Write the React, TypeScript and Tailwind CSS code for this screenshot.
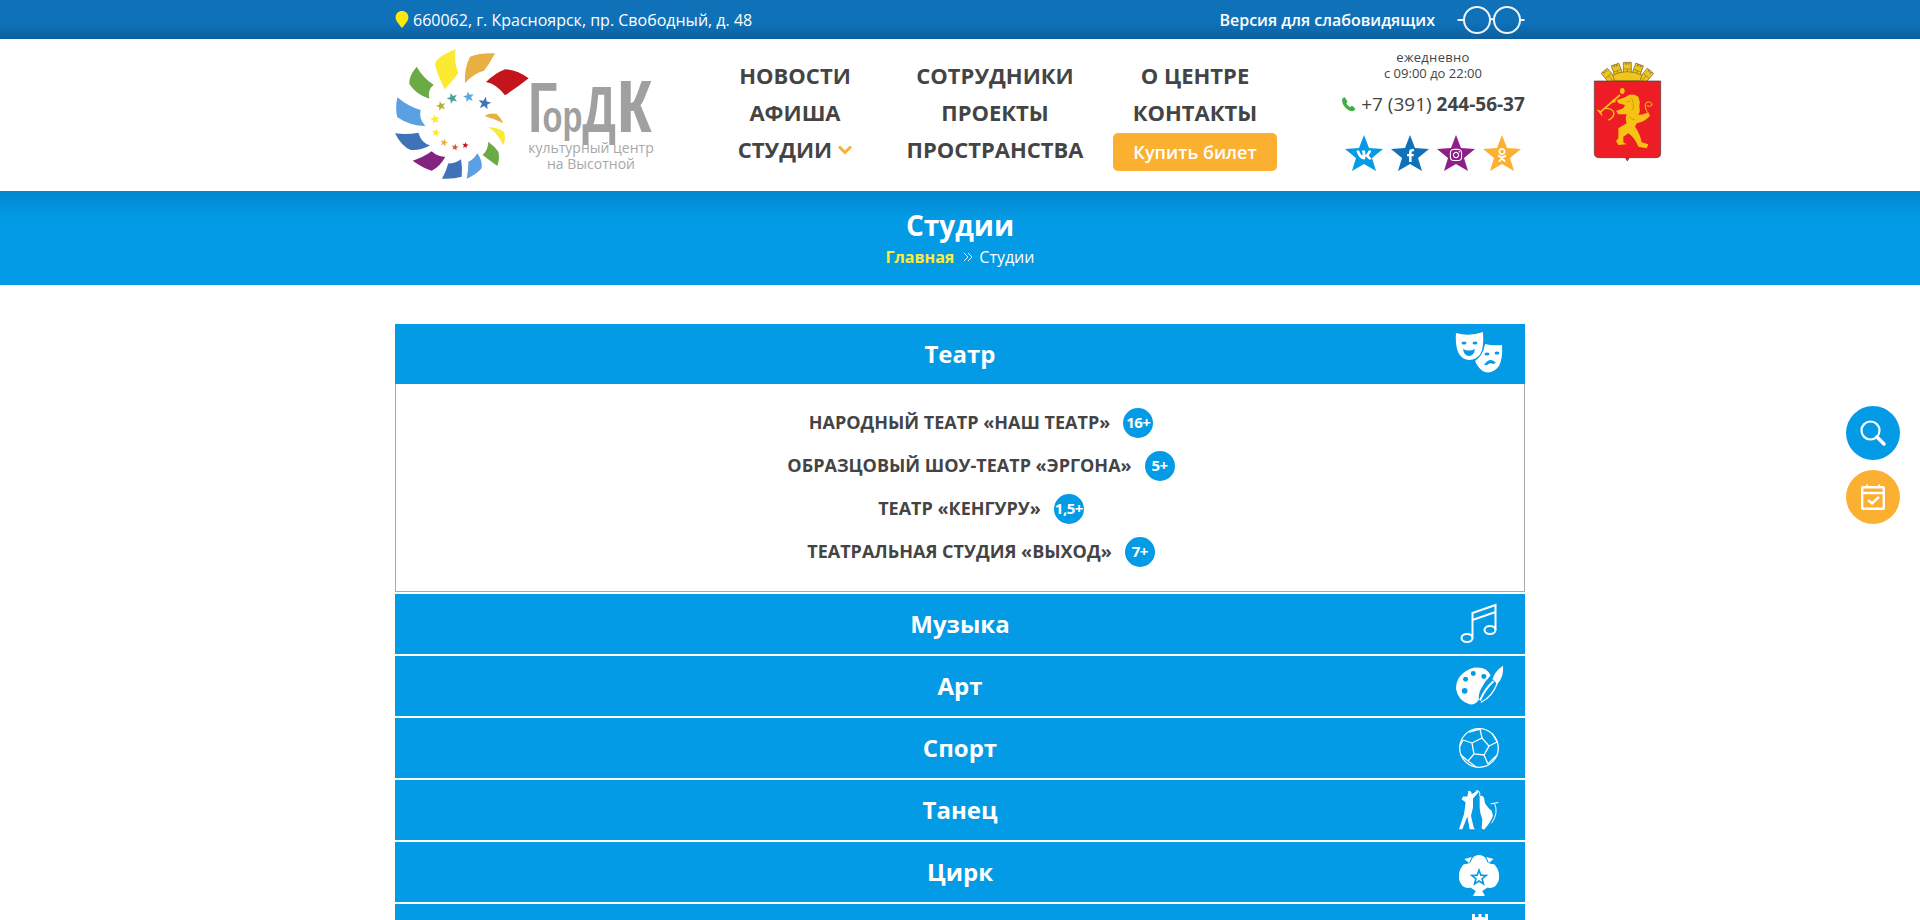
import React from 'react';
import { FaVk, FaFacebookF, FaInstagram, FaOdnoklassniki } from 'react-icons/fa';

const starPoints = (cx: number, cy: number, r: number, rot = 0) => {
  const pts: string[] = [];
  for (let i = 0; i < 10; i++) {
    const rad = i % 2 === 0 ? r : r * 0.42;
    const a = ((-90 + rot + i * 36) * Math.PI) / 180;
    pts.push(`${(cx + rad * Math.cos(a)).toFixed(1)},${(cy + rad * Math.sin(a)).toFixed(1)}`);
  }
  return pts.join(' ');
};

const Logo = () => (
  <div className="relative w-[300px] h-[140px] -ml-[5px]">
    <svg width="180" height="140" viewBox="0 0 540 420">
      <path d="M197 28 Q140 50 135 72 Q145 115 165 148 Q185 125 205 100 Q190 60 197 28Z" fill="#fbe932" />
      <path d="M315 40 Q270 38 240 50 Q222 85 225 130 Q250 100 282 92 Q300 70 315 40Z" fill="#e8b042" />
      <path d="M416 115 Q380 88 345 88 Q315 100 288 126 Q320 132 345 166 Q385 140 416 115Z" fill="#c5151c" />
      <path d="M80 80 Q55 110 58 132 Q80 165 118 176 Q112 150 131 134 Q100 115 80 80Z" fill="#6bab45" />
      <path d="M22 172 Q15 205 22 232 Q60 258 106 258 Q85 235 92 210 Q55 200 22 172Z" fill="#5ba0e3" />
      <path d="M15 280 Q35 320 62 330 Q95 332 120 316 Q95 310 85 278 Q50 285 15 280Z" fill="#4072b8" />
      <path d="M68 362 Q100 385 125 392 Q150 380 166 350 Q145 352 125 334 Q100 352 68 362Z" fill="#82247f" />
      <path d="M156 416 Q190 418 215 410 Q218 385 213 358 Q195 372 175 370 Q168 395 156 416Z" fill="#4072b8" />
      <path d="M230 416 Q258 405 275 385 Q278 362 262 340 Q250 360 235 365 Q236 390 230 416Z" fill="#5ba0e3" />
      <path d="M278 345 Q300 362 322 378 Q330 355 325 335 Q315 320 295 305 Q295 328 278 345Z" fill="#6bab45" />
      <path d="M295 262 Q320 275 340 316 Q348 295 342 275 Q320 262 295 262Z" fill="#fbe932" />
      <path d="M283 228 Q310 235 340 250 Q332 232 320 222 Q300 218 283 228Z" fill="#e8b042" />
      <polygon points={starPoints(284, 190, 20, 10)} fill="#4072b8" />
      <polygon points={starPoints(236, 171, 17, -10)} fill="#5ba8e0" />
      <polygon points={starPoints(187, 175, 17, -20)} fill="#4f9d9d" />
      <polygon points={starPoints(153, 198, 15, -15)} fill="#b5b240" />
      <polygon points={starPoints(135, 238, 15, -10)} fill="#fbe932" />
      <polygon points={starPoints(138, 278, 13, 10)} fill="#fbe932" />
      <polygon points={starPoints(162, 308, 12, 15)} fill="#e8b042" />
      <polygon points={starPoints(195, 322, 11, 10)} fill="#d8562a" />
      <polygon points={starPoints(226, 316, 10, 10)} fill="#c5151c" />
    </svg>
    <div className="absolute left-[138px] top-[14px] h-[90px] flex items-baseline text-[#a0a0a0] font-['Liberation_Sans',sans-serif] font-bold leading-[90px] whitespace-nowrap origin-left scale-x-[0.74]">
      <span className="text-[70px]">Г</span>
      <span className="text-[44px] -ml-[20px]">ор</span>
      <span className="text-[64px]">Д</span>
      <span className="text-[96px]">к</span>
    </div>
    <div className="absolute left-[137px] top-[100px] w-[128px] text-center text-[#a8a8a8] text-[14px] leading-[16px] whitespace-nowrap">
      культурный центр
      <br />
      на Высотной
    </div>
  </div>
);

const towers = [-40, -20, 0, 20, 40];

const Crest = () => (
  <svg width="75" height="110" viewBox="0 0 225 330">
    {towers.map((a) => (
      <g key={a} transform={`rotate(${a} 112 130)`}>
        <path d="M100 22 h7 v6 h2 v-6 h6 v6 h2 v-6 h7 V72 h-24Z" fill="#f2c51c" stroke="#6f6420" strokeWidth="2" />
        <path d="M100 42 h24 M112 42 v30" stroke="#6f6420" strokeWidth="1.5" />
      </g>
    ))}
    <path d="M68 60 Q112 40 156 60 L150 78 L74 78Z" fill="#f2c51c" stroke="#6f6420" strokeWidth="2" />
    <path d="M13 78 H212 V295 Q212 308 198 308 H118 L112 318 L106 308 H27 Q13 308 13 295Z" fill="#ee1c25" stroke="#4a3a3a" strokeWidth="2" />
    <path d="M108 125 Q125 112 145 125 Q152 140 148 155 Q152 170 145 180 L160 178 L175 172 L180 182 Q165 200 140 205 L135 215 Q150 235 155 262 L175 268 L170 280 L145 275 L138 260 Q125 240 115 235 L100 245 L100 262 L110 268 L85 270 L78 258 L85 250 L85 220 L110 205 Q105 190 110 178 L85 178 L78 168 L100 160 L105 150 L85 145 L80 135 L98 130Z" fill="#f8c214" />
    <path d="M125 130 Q135 145 128 165 M118 185 Q125 195 135 195 M110 140 L120 138" stroke="#c08a10" strokeWidth="2" fill="none" />
    <path d="M30 172 L90 120" stroke="#f8c214" strokeWidth="5" />
    <path d="M22 165 L36 182 L32 168Z" fill="#f8c214" stroke="#f8c214" strokeWidth="2" />
    <ellipse cx="97" cy="108" rx="7" ry="9" fill="#f8c214" />
    <circle cx="72" cy="138" r="5" fill="#f8c214" />
    <path d="M45 160 Q70 160 72 175 Q70 190 55 195" stroke="#f8c214" strokeWidth="4" fill="none" />
    <path d="M172 172 Q160 150 170 142 Q186 138 186 150 Q180 158 170 152" stroke="#f8c214" strokeWidth="3" fill="none" />
  </svg>
);

const Social = ({ fill, children }: { fill: string; children: React.ReactNode }) => (
  <div className="relative w-[38px] h-[37px] flex items-center justify-center text-white">
    <svg width="38" height="37" viewBox="0 0 38 37" className="absolute inset-0">
      <polygon points="19,0 24,13 38,14 27,23 31,36 19,29 7,36 11,23 0,14 14,13" fill={fill} />
    </svg>
    <div className="relative mt-[3px]">{children}</div>
  </div>
);

const MasksIcon = () => (
  <svg width="48" height="44" viewBox="0 0 48 44">
    <path d="M1 1 Q14 5 28 0 Q29 14 26 21 Q22 28 14 28 Q6 27 3 20 Q0 12 1 1Z" fill="white" />
    <ellipse cx="9" cy="11" rx="2.5" ry="1.6" fill="#039be5" />
    <ellipse cx="20" cy="11" rx="2.5" ry="1.6" fill="#039be5" />
    <path d="M8 17 Q14 20 20 17 Q19 24 14 24 Q9 24 8 17Z" fill="#039be5" />
    <path d="M20 29 Q28 24 30 12 Q38 14 47 13 Q48 26 44 34 Q38 42 30 40 Q24 38 20 29Z" fill="white" />
    <ellipse cx="32" cy="22" rx="2.5" ry="1.5" fill="#039be5" />
    <ellipse cx="42" cy="21" rx="2.5" ry="1.5" fill="#039be5" />
    <path d="M29 33 Q35 24 41 31 L38 32 Q35 30 32 33Z" fill="#039be5" />
  </svg>
);

const MusicIcon = () => (
  <svg width="38" height="42" viewBox="0 0 38 42" fill="none" stroke="white" strokeWidth="2">
    <ellipse cx="7" cy="35" rx="5.5" ry="4" />
    <ellipse cx="30" cy="27" rx="5.5" ry="4" />
    <path d="M12.5 35 V10 L35.5 2 V27" />
    <path d="M12.5 17 L35.5 9" />
  </svg>
);

const PaletteIcon = () => (
  <svg width="50" height="42" viewBox="0 0 50 42" className="ml-[2px]">
    <path d="M18 2 Q32 0 36 10 Q30 16 26 24 Q23 30 24 35 Q20 41 14 40 Q2 36 0 24 Q0 8 18 2Z" fill="white" />
    <circle cx="10" cy="14" r="2.6" fill="#039be5" />
    <circle cx="18" cy="8" r="2.6" fill="#039be5" />
    <circle cx="29" cy="11" r="2.6" fill="#039be5" />
    <circle cx="9" cy="26" r="3" fill="#039be5" />
    <path d="M25 36 Q30 24 39 16" stroke="white" strokeWidth="2" fill="none" />
    <path d="M26 38 Q38 32 43 18" stroke="white" strokeWidth="1.5" fill="none" />
    <path d="M38 14 Q40 6 49 0 Q50 12 43 19Z" fill="white" />
  </svg>
);

const BallIcon = () => (
  <svg width="40" height="40" viewBox="0 0 40 40" fill="none" stroke="white" strokeWidth="1.3">
    <circle cx="20" cy="20" r="19.3" />
    <path d="M13 15 L23 10 L30 18 L25 27 L15 26Z" />
    <path d="M13 15 L4 12 M23 10 L21 1 M30 18 L38 14 M25 27 L29 36 M15 26 L9 33 M9 33 L2 27 M4 12 L1 18 M21 1 L10 4 M38 14 L33 5 M29 36 L37 28 M9 33 L17 39" />
  </svg>
);

const DanceIcon = () => (
  <svg width="40" height="42" viewBox="30 30 120 125">
    <path d="M58 35 Q68 35 68 45 L85 35 L90 38 L72 58 L72 85 L66 110 L74 145 L78 150 L62 150 L55 112 L40 150 L30 150 L45 105 L50 70 L38 60 L42 52 L55 52Z" fill="white" />
    <path d="M80 35 Q95 32 92 50" stroke="white" strokeWidth="3" fill="none" />
    <path d="M92 50 Q104 48 106 60 L108 72 Q120 90 128 95 L132 110 Q125 130 105 152 L98 148 L100 120 Q92 100 92 85Z" fill="white" />
    <path d="M125 74 L148 70 M136 72 Q150 100 128 132" stroke="white" strokeWidth="3" fill="none" />
  </svg>
);

const CircusIcon = () => (
  <svg width="40" height="48" viewBox="30 195 120 145">
    <path d="M90 216 Q110 216 114 236 Q120 244 136 244 Q154 262 150 292 Q140 322 116 314 L100 325 L108 340 L72 340 L80 325 L64 314 Q40 322 30 292 Q26 262 44 244 Q60 244 66 236 Q70 216 90 216Z" fill="white" />
    <polygon points={starPoints(90, 285, 30)} fill="#039be5" />
    <polygon points={starPoints(90, 285, 16)} fill="white" />
    <path d="M46 228 L68 222 L60 240Z M134 228 L112 222 L120 240Z" fill="white" />
    <path d="M48 318 Q58 333 72 336 M132 318 Q122 333 108 336" stroke="#039be5" strokeWidth="3" fill="none" />
  </svg>
);

const TowerIcon = () => (
  <svg width="16" height="15" viewBox="0 0 16 15">
    <path d="M0 0 H3 V3 H6.5 V0 H9.5 V3 H13 V0 H16 V15 H0Z" fill="white" />
  </svg>
);

const nav = [
  ['НОВОСТИ', 'АФИША', 'СТУДИИ'],
  ['СОТРУДНИКИ', 'ПРОЕКТЫ', 'ПРОСТРАНСТВА'],
  ['О ЦЕНТРЕ', 'КОНТАКТЫ'],
];

const studios = [
  { name: 'НАРОДНЫЙ ТЕАТР «НАШ ТЕАТР»', age: '16+' },
  { name: 'ОБРАЗЦОВЫЙ ШОУ-ТЕАТР «ЭРГОНА»', age: '5+' },
  { name: 'ТЕАТР «КЕНГУРУ»', age: '1,5+' },
  { name: 'ТЕАТРАЛЬНАЯ СТУДИЯ «ВЫХОД»', age: '7+' },
];

const sections = [
  { title: 'Музыка', icon: <MusicIcon /> },
  { title: 'Арт', icon: <PaletteIcon /> },
  { title: 'Спорт', icon: <BallIcon /> },
  { title: 'Танец', icon: <DanceIcon /> },
  { title: 'Цирк', icon: <CircusIcon /> },
];

const SectionHead = ({ title, icon }: { title: string; icon: React.ReactNode }) => (
  <div className="relative h-[60px] bg-[#039be5] flex items-center justify-center">
    <span className="text-white font-bold text-[24px]">{title}</span>
    <div className="absolute right-[21px] top-0 bottom-0 w-[50px] flex items-center justify-center">{icon}</div>
  </div>
);

export default function App() {
  return (
    <div className="relative h-[920px] overflow-hidden bg-white font-['Open_Sans',sans-serif] text-[#444]">
      {/* верхняя полоса */}
      <div className="h-[39px] bg-gradient-to-b from-[#0f71b8] from-60% to-[#0c5f9e]">
        <div className="w-[1130px] mx-auto h-full flex items-center justify-between text-white">
          <div className="flex items-center gap-[4px] text-[16px]">
            <svg width="14" height="17" viewBox="0 0 13 16">
              <path d="M6.5 0 C10 0 12.5 2.5 12.5 6 C12.5 9.5 8.5 13 6.5 16 C4.5 13 0.5 9.5 0.5 6 C0.5 2.5 3 0 6.5 0Z" fill="#fde70c" />
            </svg>
            <span>660062, г. Красноярск, пр. Свободный, д. 48</span>
          </div>
          <div className="flex items-center gap-[22px]">
            <span className="text-[16px] font-semibold">Версия для слабовидящих</span>
            <svg width="68" height="30" viewBox="0 0 68 30" fill="none" stroke="#eef3f8" strokeWidth="2">
              <circle cx="20" cy="15" r="13" />
              <circle cx="50" cy="15" r="13" />
              <path d="M33 15 Q35 13 37 15" />
              <path d="M0.500 15 H7 M63 15 H67.500" />
            </svg>
          </div>
        </div>
      </div>

      {/* шапка */}
      <div className="h-[152px] bg-white">
        <div className="w-[1130px] mx-auto h-full flex items-start">
          <div className="w-[300px] shrink-0 pt-[1px]">
            <Logo />
          </div>
          <nav className="w-[600px] shrink-0 grid grid-cols-3 pt-[18px] text-[#444]">
            {nav.map((col, i) => (
              <div key={i} className="flex flex-col items-center">
                {col.map((item) => (
                  <div key={item} className="h-[37px] flex items-center text-[22px] font-bold whitespace-nowrap">
                    {item}
                    {item === 'СТУДИИ' && (
                      <svg width="14" height="10" viewBox="0 0 14 10" className="ml-[6px]" fill="none" stroke="#fbb031" strokeWidth="3">
                        <path d="M1 1.5 L7 7.5 L13 1.5" />
                      </svg>
                    )}
                  </div>
                ))}
                {i === 2 && (
                  <div className="w-[164px] h-[38px] mt-[2px] rounded-[5px] bg-[#fbb031] text-white text-[18px] font-semibold flex items-center justify-center">
                    Купить билет
                  </div>
                )}
              </div>
            ))}
          </nav>
          <div className="w-[184px] ml-[46px] shrink-0 flex flex-col items-center pt-[10px]">
            <div className="text-[13px] leading-[16px] text-center whitespace-nowrap">
              <span className="tracking-[0.3px]">ежедневно</span>
              <br />с 09:00 до 22:00
            </div>
            <div className="flex items-center gap-[5px] mt-[8px] text-[19px] leading-[30px] whitespace-nowrap">
              <svg width="15" height="16" viewBox="0 0 24 24">
                <path d="M6 1 L10 7 Q10.5 9 8.5 10.5 Q9 14 14.5 17 L16.5 15 Q18 14.5 19.5 16 L23 20 Q22 23 18 23.5 Q10 23 4 14 Q0 7 3 2.5 Q4.500 1 6 1Z" fill="#3fae49" />
              </svg>
              <span>
                +7 (391) <span className="font-bold">244-56-37</span>
              </span>
            </div>
            <div className="flex gap-[8px] mt-[16px]">
              <Social fill="#039be5">
                <FaVk size={16} />
              </Social>
              <Social fill="#0f71b8">
                <FaFacebookF size={13} />
              </Social>
              <Social fill="#8e1f86">
                <FaInstagram size={14} />
              </Social>
              <Social fill="#fbb031">
                <FaOdnoklassniki size={14} />
              </Social>
            </div>
          </div>
          <div className="ml-[65px] shrink-0 pt-[16px]">
            <Crest />
          </div>
        </div>
      </div>

      {/* заголовок страницы */}
      <div className="h-[94px] bg-gradient-to-b from-[#0288cf] to-[#039be5] to-30% flex flex-col items-center">
        <h1 className="text-white font-bold text-[28px] leading-[36px] mt-[16px]">Студии</h1>
        <div className="flex items-center text-[16px] leading-[20px] mt-[4px] text-white">
          <span className="font-bold text-[#fdea3b]">Главная</span>
          <svg width="10" height="10" viewBox="0 0 10 10" className="ml-[9px] mr-[6px]" fill="none" stroke="#e6f4fc" strokeWidth="1">
            <path d="M1 1 L5 5 L1 9 M5 1 L9 5 L5 9" />
          </svg>
          <span>Студии</span>
        </div>
      </div>

      {/* аккордеон */}
      <div className="w-[1130px] mx-auto mt-[39px] flex flex-col">
        <SectionHead title="Театр" icon={<MasksIcon />} />
        <div className="h-[208px] border border-t-0 border-[#a9a9a9] flex flex-col items-center pt-[17px] pl-[42px] mb-[2px]">
          {studios.map((s) => (
            <div key={s.name} className="h-[43px] flex items-center gap-[13px]">
              <span className="text-[18px] font-bold text-[#444] whitespace-nowrap">{s.name}</span>
              <span className="w-[30px] h-[30px] rounded-full bg-[#039be5] text-white text-[15px] font-bold flex items-center justify-center whitespace-nowrap tracking-[-0.5px]">
                {s.age}
              </span>
            </div>
          ))}
        </div>
        <div className="flex flex-col gap-[2px]">
          {sections.map((s) => (
            <SectionHead key={s.title} title={s.title} icon={s.icon} />
          ))}
          <div className="relative h-[60px] bg-[#039be5] flex justify-center">
            <div className="absolute right-[37px] top-[10px]">
              <TowerIcon />
            </div>
          </div>
        </div>
      </div>

      {/* плавающие кнопки */}
      <div className="absolute right-[20px] top-[406px] flex flex-col gap-[10px]">
        <div className="w-[54px] h-[54px] rounded-full bg-[#039be5] flex items-center justify-center">
          <svg width="28" height="28" viewBox="0 0 28 28" fill="none" stroke="white">
            <circle cx="11.500" cy="11.500" r="9" strokeWidth="2.200" />
            <path d="M18 18 L25 25" strokeWidth="3.500" strokeLinecap="round" />
          </svg>
        </div>
        <div className="w-[54px] h-[54px] rounded-full bg-[#fbb031] flex items-center justify-center">
          <svg width="24" height="26" viewBox="0 0 24 26" fill="none" stroke="white">
            <rect x="1.200" y="3.200" width="21.600" height="21.600" rx="1" strokeWidth="2.400" />
            <path d="M1 9 H23" strokeWidth="2.400" />
            <path d="M6 0.500 V4 M18 0.500 V4" strokeWidth="2" />
            <path d="M7 16 L11 19.500 L18 13" strokeWidth="2.400" />
          </svg>
        </div>
      </div>
    </div>
  );
}
